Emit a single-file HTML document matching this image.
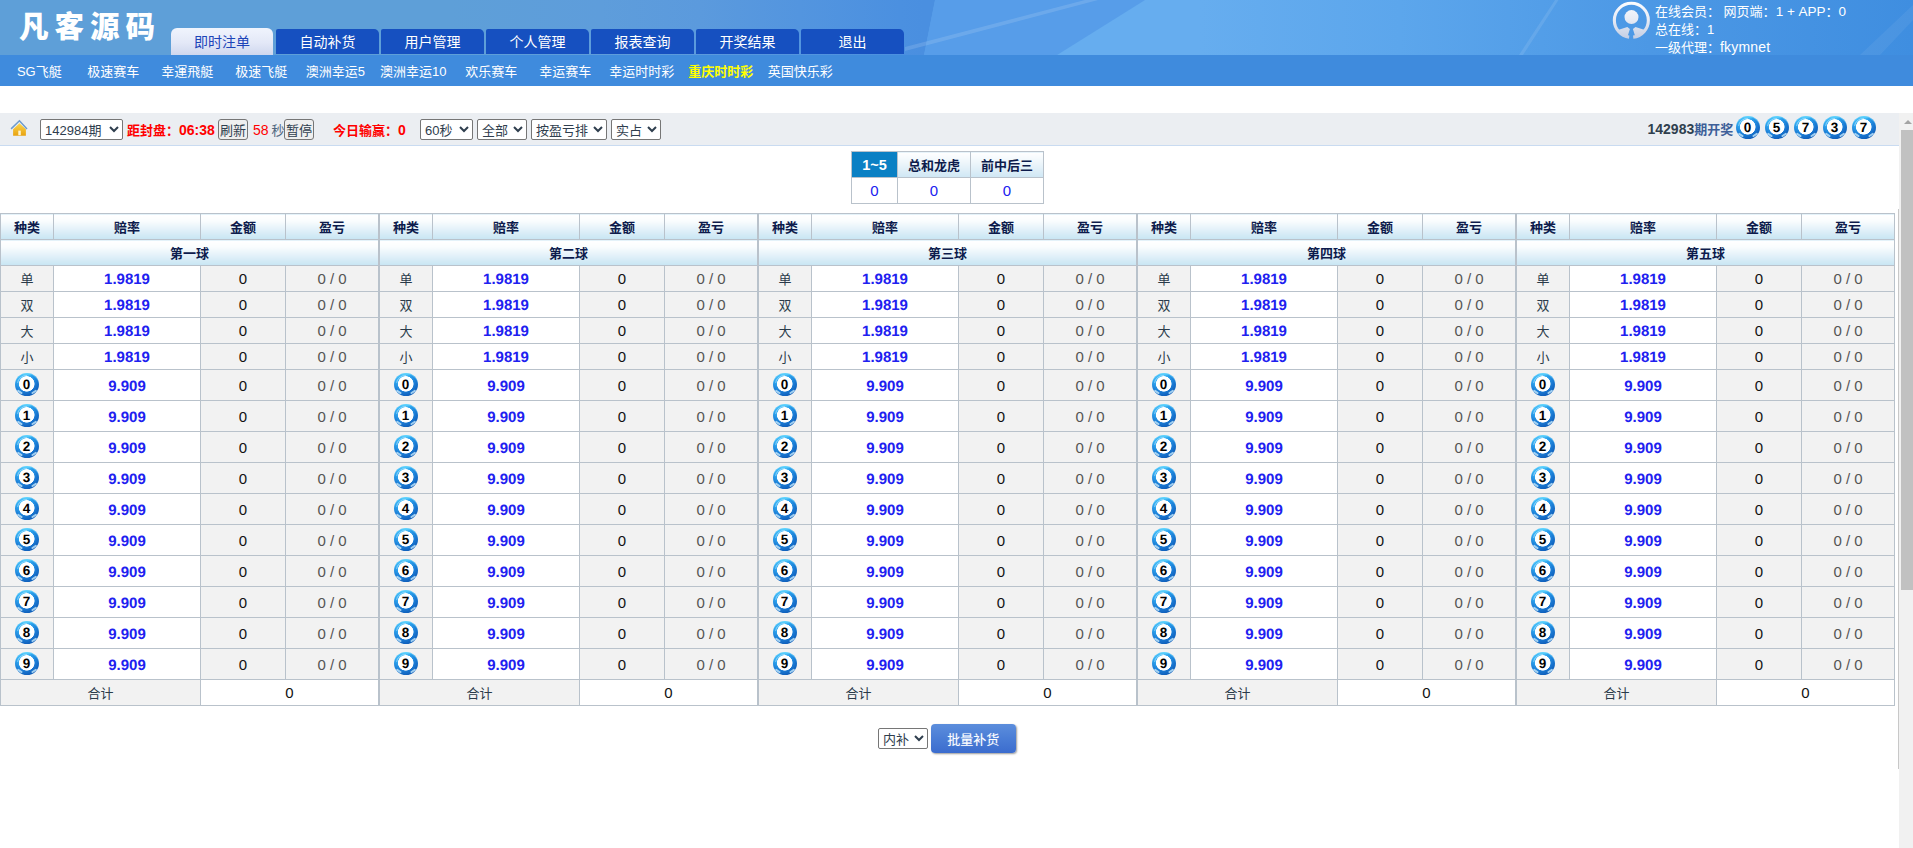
<!DOCTYPE html>
<html lang="zh-CN"><head><meta charset="utf-8"><title>凡客源码</title>
<style>
html,body{margin:0;padding:0}
body{width:1913px;height:848px;overflow:hidden;background:#fff;position:relative;font-family:"Liberation Sans","Noto Sans CJK SC",sans-serif;font-size:13px;color:#222}
a{text-decoration:none;color:inherit}
#hd{position:absolute;left:0;top:0;width:1913px;height:55px;background:linear-gradient(90deg,#5e9fd8 0,#5e9fd8 450px,#5e9ddb 600px,#5b9add 700px,#5395df 800px,#4b90e0 900px,#4a8fe0 924px,#66adef 924px,#66adef 1200px,#5ca6ec 1400px,#4c98e5 1650px,#3f8ee0 1913px);overflow:hidden}
#logo{position:absolute;left:19px;top:1.5px;font-size:29.5px;line-height:44px;font-weight:900;color:#fff;letter-spacing:6px;font-family:"Noto Sans CJK SC","Liberation Sans",sans-serif}
.tab{position:absolute;top:29px;width:103px;height:25px;line-height:26px;text-align:center;color:#fff;font-size:14px;background:#1650c0;border-radius:2px 5px 0 0}
.tab.on{top:28px;height:27px;line-height:29px;width:102px;color:#1c44b8;background:linear-gradient(#f0f4fd,#e3e8f7 55%,#cfd7ee);border-radius:6px 6px 0 0}
#usr{position:absolute;left:1655px;top:3.1px;color:#fff;font-size:13px;line-height:17.75px;white-space:nowrap}
#usr span{line-height:0}
#ava{position:absolute;left:1605px;top:0}
#nav{position:absolute;left:0;top:55px;width:1913px;height:31px;background:#3f8bdd}
#nav a{position:absolute;top:0;height:31px;line-height:33px;text-align:center;color:#fff;font-size:13px;white-space:nowrap}
#nav a.cur{color:#ff0;font-weight:bold}
#bar{position:absolute;left:0;top:113px;width:1899px;height:32px;background:#ebeef2;border-bottom:1px solid #c9dbf1}
#bar .x{position:absolute;white-space:nowrap}
.sel{position:absolute;box-sizing:border-box;height:21px;top:6px;border:1px solid #767676;border-radius:2px;background:#fff;font-size:13px;line-height:20px;padding-left:4px;color:#2f3e4e;white-space:nowrap}
.sel{font-family:inherit;margin:0;padding:0 0 0 0;outline:0}
select.sel{font-size:13px;padding-top:2px}
span.sel:after{content:"";position:absolute;right:6px;top:5px;width:5px;height:5px;border-right:2px solid #2c3a44;border-bottom:2px solid #2c3a44;transform:rotate(45deg) scale(.9)}
.btn{position:absolute;box-sizing:border-box;top:6px;height:21px;border:1px solid #767676;border-radius:3px;background:#efefef;font-size:13px;line-height:21px;text-align:center;color:#2f3e4e}
button.btn{font-family:inherit;margin:0;padding:2px 0 0 0;line-height:17px}
.red{color:#f00}
em{font-style:normal;font-size:14px}
.b{font-weight:bold}
#sub{position:absolute;left:851px;top:151px;border-collapse:collapse;font-size:13px}
#sub td,#sub th{border:1px solid #b9c2cb;height:26px;padding:0;text-align:center;box-sizing:border-box}
#sub th{font-weight:bold;color:#0d1b4c;background:linear-gradient(#fff,#eef6fb 40%,#cfe7f4)}
#sub th.on{background:#0a80c4;color:#fff;font-size:14.5px}
#sub td{color:#2020f0;background:#fff;font-size:15px}
.t{position:absolute;top:213px;width:378px;border-collapse:collapse;table-layout:fixed;font-size:13px}
.t td,.t th{border:1px solid #b9c2cb;padding:0;text-align:center;box-sizing:border-box;height:26px;line-height:20px}
.t th{font-weight:bold;color:#0d1b4c;background:linear-gradient(#fff 0,#fafdfe 25%,#e3f1f9 60%,#c7e5f3 100%)}
.t td.k{background:#f2f2f2;color:#2a3b4a}
.t td.o{background:#fff;color:#2020f0;font-weight:bold;font-size:15px;text-rendering:geometricPrecision}
.t td.m{background:#f2f2f2;color:#111;font-size:15px}
.t td.y{background:#f2f2f2;color:#555;font-size:15px}
.t td.s{background:#fff;color:#111;font-size:15px}
.t tr.r2 td{height:31px}
.t tr.r2 td.k{vertical-align:top;line-height:0}
.t tr.r2 td.k .ball{margin-top:3px}
.t tr.r2 td.o,.t tr.r2 td.m,.t tr.r2 td.y{padding-top:2px}
.t th{padding-top:2px}
.t tr.r1 td.k,.t tr.ft td.k,.t tr.r1 td.o{padding-top:2px}
.t tr.r2 td.o{padding-top:4px}
.t tr.ft td{height:26px}
.ball{display:inline-block;position:relative;width:24px;height:23px;border-radius:50%;vertical-align:middle;background:radial-gradient(8.05px 7.95px at 11.75px 10.9px,#fff 93%,rgba(255,255,255,0) 100%),radial-gradient(8px 2.6px at 12px .6px,rgba(110,225,255,.85) 0,rgba(110,225,255,0) 100%),radial-gradient(19px 19px at 8.5px 5px,#4cc4fb 0,#2fa6ef 38%,#1a7ad4 72%,#0f5db8 100%);box-shadow:inset 0 1.3px .8px -.3px rgba(90,208,255,.9)}
.ball b{position:absolute;left:0;top:0;width:23px;height:23px;text-align:center;font:bold 13.5px/1 "Liberation Sans",sans-serif;color:#000;text-rendering:geometricPrecision;box-sizing:border-box;padding-top:5.1px}
.ball b:before{content:"";position:absolute;left:2.4px;top:1.6px;width:16px;height:16px;border-radius:50%;border:1.3px solid transparent;border-top-color:rgba(255,255,255,.38);transform:rotate(-38deg)}
.ball:before,.ball:after{content:"";position:absolute;height:1.5px;width:5.9px;border-radius:1px;background:rgba(196,232,251,.8)}
.ball:before{left:2.1px;top:17.8px;transform:rotate(32.3deg)}
.ball:after{left:16.2px;top:17.6px;transform:rotate(-32deg)}
#sb{position:absolute;left:1899px;top:113px;width:14px;height:735px;background:#f1f1f1}
#sb .th{position:absolute;left:2px;top:17px;width:12px;height:460px;background:#c1c1c1}
#sb .ar{position:absolute;left:4.5px;top:7px;width:0;height:0;border-left:4px solid transparent;border-right:4px solid transparent;border-bottom:4px solid #a3a3a3}
#vl{position:absolute;left:1898px;top:209px;width:1px;height:560px;background:#c8c8c8}
#bt{position:absolute;left:0;top:724px;width:1899px;height:30px}
#bt .sel{top:4px;left:878px;width:50px}
#go{border:0;margin:0;padding:1px 0 0 0;font-family:inherit;cursor:pointer;position:absolute;left:931px;top:0;width:84.5px;height:29px;line-height:30px;text-align:center;color:#fff;font-size:13px;border-radius:4px;background:linear-gradient(#5c8edc,#4a7dd6 50%,#3b6cce);box-shadow:1px 1px 2px rgba(0,0,0,.4);text-shadow:0 0 1px rgba(255,255,255,.4)}
</style></head><body>
<div id="hd">
<svg style="position:absolute;left:0;top:0" width="1913" height="55" viewBox="0 0 1913 55"><polygon points="924,0 935,0 924,55" fill="#4a8fe0"/><polygon points="924,55 935,0 1145,0 1057,55" fill="#488de3" fill-opacity=".5"/><polygon points="905,47 1085,0 1098,0 905,51" fill="#fff" fill-opacity=".13"/><polygon points="1519,55 1555,0 1558.5,0 1523,55" fill="#fff" fill-opacity=".10"/><polygon points="1860,55 1913,5 1913,20 1880,55" fill="#fff" fill-opacity=".06"/></svg>
<div id="logo">凡客源码</div>
<a class="tab on" style="left:171px">即时注单</a><a class="tab" style="left:276px">自动补货</a><a class="tab" style="left:381px">用户管理</a><a class="tab" style="left:486px">个人管理</a><a class="tab" style="left:591px">报表查询</a><a class="tab" style="left:696px">开奖结果</a><a class="tab" style="left:801px">退出</a>
<svg id="ava" width="60" height="44" viewBox="0 0 60 44"><defs><linearGradient id="ag" gradientUnits="userSpaceOnUse" x1="0" y1="2" x2="0" y2="39"><stop offset="0" stop-color="#fcfcfe"/><stop offset=".5" stop-color="#e6eaf4"/><stop offset="1" stop-color="#c3cde3"/></linearGradient><clipPath id="ac"><circle cx="26.35" cy="20.25" r="16.6"/></clipPath></defs><circle cx="26.35" cy="20.25" r="17" fill="none" stroke="url(#ag)" stroke-width="3.1" stroke-dasharray="24.6 4.2 78"/><circle cx="26.5" cy="17.1" r="7" fill="url(#ag)"/><g clip-path="url(#ac)" fill="url(#ag)"><path d="M8 31.7L22.3 27L24.9 29L22.8 35.8L24.3 38.5L20 42H8Z"/><path d="M44.8 31.7L30.5 27L27.9 29L30 35.8L28.5 38.5L32.8 42H44.8Z"/></g></svg>
<div id="usr">在线会员： 网页端：<span style="font-size:13.5px">1 + APP</span>：<span style="font-size:13.5px">0</span><br>总在线：1<br>一级代理：<span style="font-size:14px;letter-spacing:.2px">fkymnet</span></div>
</div>
<div id="nav"><a style="left:2.3px;width:74px">SG飞艇</a><a style="left:76.3px;width:74px">极速赛车</a><a style="left:150.3px;width:74px">幸運飛艇</a><a style="left:224.3px;width:74px">极速飞艇</a><a style="left:298.3px;width:74px">澳洲幸运5</a><a style="left:372.3px;width:82px">澳洲幸运10</a><a style="left:454.3px;width:74px">欢乐赛车</a><a style="left:528.3px;width:74px">幸运赛车</a><a style="left:602.3px;width:79px">幸运时时彩</a><a class="cur" style="left:681.3px;width:79px">重庆时时彩</a><a style="left:760.3px;width:80px">英国快乐彩</a></div>
<div id="bar">
<svg class="x" style="left:10px;top:6px" width="19" height="19" viewBox="0 0 19 19"><defs><linearGradient id="hg" x1="0" y1="0" x2="0" y2="1"><stop offset="0" stop-color="#fbd64e"/><stop offset="1" stop-color="#e8a210"/></linearGradient></defs><path d="M9.45 4.2L15.9 10.2V16.8H3.1V10.2Z" fill="url(#hg)"/><path d="M1.1 9.9L9.45 1.8L17 9.9" fill="none" stroke="#6d9bcd" stroke-width="1.5" stroke-linejoin="miter"/><rect x="8.3" y="11.6" width="2.5" height="4.6" fill="#fff3cf"/></svg>
<select class="sel" style="left:40px;width:83px"><option>142984期</option></select>
<span class="x red b" style="left:127px;top:8px;line-height:19px">距封盘：<em>06:38</em></span>
<button class="btn" style="left:218px;width:30px">刷新</button>
<span class="x" style="left:253px;top:8px;line-height:19px"><span class="red"><em>58</em></span><span style="color:#4f6780;margin-left:3px">秒</span></span>
<button class="btn" style="left:284px;width:30px">暂停</button>
<span class="x red b" style="left:333px;top:8px;line-height:19px">今日输赢：<em>0</em></span>
<select class="sel" style="left:420px;width:53px"><option>60秒</option><option>30秒</option><option>90秒</option></select>
<select class="sel" style="left:477px;width:50px"><option>全部</option></select>
<select class="sel" style="left:531px;width:76px"><option>按盈亏排</option></select>
<select class="sel" style="left:611px;width:50px"><option>实占</option><option>虚占</option></select>
<span class="x b" style="left:1647.5px;top:7px;line-height:19px;color:#3d5f99"><em style="color:#2f3f4e">142983</em>期开奖</span>
<span class="ball" style="position:absolute;left:1736px;top:3px"><b>0</b></span><span class="ball" style="position:absolute;left:1765px;top:3px"><b>5</b></span><span class="ball" style="position:absolute;left:1794px;top:3px"><b>7</b></span><span class="ball" style="position:absolute;left:1823px;top:3px"><b>3</b></span><span class="ball" style="position:absolute;left:1852px;top:3px"><b>7</b></span>
</div>
<table id="sub"><tr><th class="on" style="width:46px">1~5</th><th style="width:73px">总和龙虎</th><th style="width:73px">前中后三</th></tr><tr><td>0</td><td>0</td><td>0</td></tr></table>
<table class="t" style="left:0px"><colgroup><col style="width:53px"><col style="width:147px"><col style="width:85px"><col style="width:93px"></colgroup>
<tr class="hd"><th>种类</th><th>赔率</th><th>金额</th><th>盈亏</th></tr>
<tr class="hd tt"><th colspan="4">第一球</th></tr>
<tr class="r1"><td class="k">单</td><td class="o">1.9819</td><td class="m">0</td><td class="y">0 / 0</td></tr>
<tr class="r1"><td class="k">双</td><td class="o">1.9819</td><td class="m">0</td><td class="y">0 / 0</td></tr>
<tr class="r1"><td class="k">大</td><td class="o">1.9819</td><td class="m">0</td><td class="y">0 / 0</td></tr>
<tr class="r1"><td class="k">小</td><td class="o">1.9819</td><td class="m">0</td><td class="y">0 / 0</td></tr>
<tr class="r2"><td class="k"><span class="ball"><b>0</b></span></td><td class="o">9.909</td><td class="m">0</td><td class="y">0 / 0</td></tr>
<tr class="r2"><td class="k"><span class="ball"><b>1</b></span></td><td class="o">9.909</td><td class="m">0</td><td class="y">0 / 0</td></tr>
<tr class="r2"><td class="k"><span class="ball"><b>2</b></span></td><td class="o">9.909</td><td class="m">0</td><td class="y">0 / 0</td></tr>
<tr class="r2"><td class="k"><span class="ball"><b>3</b></span></td><td class="o">9.909</td><td class="m">0</td><td class="y">0 / 0</td></tr>
<tr class="r2"><td class="k"><span class="ball"><b>4</b></span></td><td class="o">9.909</td><td class="m">0</td><td class="y">0 / 0</td></tr>
<tr class="r2"><td class="k"><span class="ball"><b>5</b></span></td><td class="o">9.909</td><td class="m">0</td><td class="y">0 / 0</td></tr>
<tr class="r2"><td class="k"><span class="ball"><b>6</b></span></td><td class="o">9.909</td><td class="m">0</td><td class="y">0 / 0</td></tr>
<tr class="r2"><td class="k"><span class="ball"><b>7</b></span></td><td class="o">9.909</td><td class="m">0</td><td class="y">0 / 0</td></tr>
<tr class="r2"><td class="k"><span class="ball"><b>8</b></span></td><td class="o">9.909</td><td class="m">0</td><td class="y">0 / 0</td></tr>
<tr class="r2"><td class="k"><span class="ball"><b>9</b></span></td><td class="o">9.909</td><td class="m">0</td><td class="y">0 / 0</td></tr>
<tr class="ft"><td class="k" colspan="2">合计</td><td class="s" colspan="2">0</td></tr>
</table><table class="t" style="left:379px"><colgroup><col style="width:53px"><col style="width:147px"><col style="width:85px"><col style="width:93px"></colgroup>
<tr class="hd"><th>种类</th><th>赔率</th><th>金额</th><th>盈亏</th></tr>
<tr class="hd tt"><th colspan="4">第二球</th></tr>
<tr class="r1"><td class="k">单</td><td class="o">1.9819</td><td class="m">0</td><td class="y">0 / 0</td></tr>
<tr class="r1"><td class="k">双</td><td class="o">1.9819</td><td class="m">0</td><td class="y">0 / 0</td></tr>
<tr class="r1"><td class="k">大</td><td class="o">1.9819</td><td class="m">0</td><td class="y">0 / 0</td></tr>
<tr class="r1"><td class="k">小</td><td class="o">1.9819</td><td class="m">0</td><td class="y">0 / 0</td></tr>
<tr class="r2"><td class="k"><span class="ball"><b>0</b></span></td><td class="o">9.909</td><td class="m">0</td><td class="y">0 / 0</td></tr>
<tr class="r2"><td class="k"><span class="ball"><b>1</b></span></td><td class="o">9.909</td><td class="m">0</td><td class="y">0 / 0</td></tr>
<tr class="r2"><td class="k"><span class="ball"><b>2</b></span></td><td class="o">9.909</td><td class="m">0</td><td class="y">0 / 0</td></tr>
<tr class="r2"><td class="k"><span class="ball"><b>3</b></span></td><td class="o">9.909</td><td class="m">0</td><td class="y">0 / 0</td></tr>
<tr class="r2"><td class="k"><span class="ball"><b>4</b></span></td><td class="o">9.909</td><td class="m">0</td><td class="y">0 / 0</td></tr>
<tr class="r2"><td class="k"><span class="ball"><b>5</b></span></td><td class="o">9.909</td><td class="m">0</td><td class="y">0 / 0</td></tr>
<tr class="r2"><td class="k"><span class="ball"><b>6</b></span></td><td class="o">9.909</td><td class="m">0</td><td class="y">0 / 0</td></tr>
<tr class="r2"><td class="k"><span class="ball"><b>7</b></span></td><td class="o">9.909</td><td class="m">0</td><td class="y">0 / 0</td></tr>
<tr class="r2"><td class="k"><span class="ball"><b>8</b></span></td><td class="o">9.909</td><td class="m">0</td><td class="y">0 / 0</td></tr>
<tr class="r2"><td class="k"><span class="ball"><b>9</b></span></td><td class="o">9.909</td><td class="m">0</td><td class="y">0 / 0</td></tr>
<tr class="ft"><td class="k" colspan="2">合计</td><td class="s" colspan="2">0</td></tr>
</table><table class="t" style="left:758px"><colgroup><col style="width:53px"><col style="width:147px"><col style="width:85px"><col style="width:93px"></colgroup>
<tr class="hd"><th>种类</th><th>赔率</th><th>金额</th><th>盈亏</th></tr>
<tr class="hd tt"><th colspan="4">第三球</th></tr>
<tr class="r1"><td class="k">单</td><td class="o">1.9819</td><td class="m">0</td><td class="y">0 / 0</td></tr>
<tr class="r1"><td class="k">双</td><td class="o">1.9819</td><td class="m">0</td><td class="y">0 / 0</td></tr>
<tr class="r1"><td class="k">大</td><td class="o">1.9819</td><td class="m">0</td><td class="y">0 / 0</td></tr>
<tr class="r1"><td class="k">小</td><td class="o">1.9819</td><td class="m">0</td><td class="y">0 / 0</td></tr>
<tr class="r2"><td class="k"><span class="ball"><b>0</b></span></td><td class="o">9.909</td><td class="m">0</td><td class="y">0 / 0</td></tr>
<tr class="r2"><td class="k"><span class="ball"><b>1</b></span></td><td class="o">9.909</td><td class="m">0</td><td class="y">0 / 0</td></tr>
<tr class="r2"><td class="k"><span class="ball"><b>2</b></span></td><td class="o">9.909</td><td class="m">0</td><td class="y">0 / 0</td></tr>
<tr class="r2"><td class="k"><span class="ball"><b>3</b></span></td><td class="o">9.909</td><td class="m">0</td><td class="y">0 / 0</td></tr>
<tr class="r2"><td class="k"><span class="ball"><b>4</b></span></td><td class="o">9.909</td><td class="m">0</td><td class="y">0 / 0</td></tr>
<tr class="r2"><td class="k"><span class="ball"><b>5</b></span></td><td class="o">9.909</td><td class="m">0</td><td class="y">0 / 0</td></tr>
<tr class="r2"><td class="k"><span class="ball"><b>6</b></span></td><td class="o">9.909</td><td class="m">0</td><td class="y">0 / 0</td></tr>
<tr class="r2"><td class="k"><span class="ball"><b>7</b></span></td><td class="o">9.909</td><td class="m">0</td><td class="y">0 / 0</td></tr>
<tr class="r2"><td class="k"><span class="ball"><b>8</b></span></td><td class="o">9.909</td><td class="m">0</td><td class="y">0 / 0</td></tr>
<tr class="r2"><td class="k"><span class="ball"><b>9</b></span></td><td class="o">9.909</td><td class="m">0</td><td class="y">0 / 0</td></tr>
<tr class="ft"><td class="k" colspan="2">合计</td><td class="s" colspan="2">0</td></tr>
</table><table class="t" style="left:1137px"><colgroup><col style="width:53px"><col style="width:147px"><col style="width:85px"><col style="width:93px"></colgroup>
<tr class="hd"><th>种类</th><th>赔率</th><th>金额</th><th>盈亏</th></tr>
<tr class="hd tt"><th colspan="4">第四球</th></tr>
<tr class="r1"><td class="k">单</td><td class="o">1.9819</td><td class="m">0</td><td class="y">0 / 0</td></tr>
<tr class="r1"><td class="k">双</td><td class="o">1.9819</td><td class="m">0</td><td class="y">0 / 0</td></tr>
<tr class="r1"><td class="k">大</td><td class="o">1.9819</td><td class="m">0</td><td class="y">0 / 0</td></tr>
<tr class="r1"><td class="k">小</td><td class="o">1.9819</td><td class="m">0</td><td class="y">0 / 0</td></tr>
<tr class="r2"><td class="k"><span class="ball"><b>0</b></span></td><td class="o">9.909</td><td class="m">0</td><td class="y">0 / 0</td></tr>
<tr class="r2"><td class="k"><span class="ball"><b>1</b></span></td><td class="o">9.909</td><td class="m">0</td><td class="y">0 / 0</td></tr>
<tr class="r2"><td class="k"><span class="ball"><b>2</b></span></td><td class="o">9.909</td><td class="m">0</td><td class="y">0 / 0</td></tr>
<tr class="r2"><td class="k"><span class="ball"><b>3</b></span></td><td class="o">9.909</td><td class="m">0</td><td class="y">0 / 0</td></tr>
<tr class="r2"><td class="k"><span class="ball"><b>4</b></span></td><td class="o">9.909</td><td class="m">0</td><td class="y">0 / 0</td></tr>
<tr class="r2"><td class="k"><span class="ball"><b>5</b></span></td><td class="o">9.909</td><td class="m">0</td><td class="y">0 / 0</td></tr>
<tr class="r2"><td class="k"><span class="ball"><b>6</b></span></td><td class="o">9.909</td><td class="m">0</td><td class="y">0 / 0</td></tr>
<tr class="r2"><td class="k"><span class="ball"><b>7</b></span></td><td class="o">9.909</td><td class="m">0</td><td class="y">0 / 0</td></tr>
<tr class="r2"><td class="k"><span class="ball"><b>8</b></span></td><td class="o">9.909</td><td class="m">0</td><td class="y">0 / 0</td></tr>
<tr class="r2"><td class="k"><span class="ball"><b>9</b></span></td><td class="o">9.909</td><td class="m">0</td><td class="y">0 / 0</td></tr>
<tr class="ft"><td class="k" colspan="2">合计</td><td class="s" colspan="2">0</td></tr>
</table><table class="t" style="left:1516px"><colgroup><col style="width:53px"><col style="width:147px"><col style="width:85px"><col style="width:93px"></colgroup>
<tr class="hd"><th>种类</th><th>赔率</th><th>金额</th><th>盈亏</th></tr>
<tr class="hd tt"><th colspan="4">第五球</th></tr>
<tr class="r1"><td class="k">单</td><td class="o">1.9819</td><td class="m">0</td><td class="y">0 / 0</td></tr>
<tr class="r1"><td class="k">双</td><td class="o">1.9819</td><td class="m">0</td><td class="y">0 / 0</td></tr>
<tr class="r1"><td class="k">大</td><td class="o">1.9819</td><td class="m">0</td><td class="y">0 / 0</td></tr>
<tr class="r1"><td class="k">小</td><td class="o">1.9819</td><td class="m">0</td><td class="y">0 / 0</td></tr>
<tr class="r2"><td class="k"><span class="ball"><b>0</b></span></td><td class="o">9.909</td><td class="m">0</td><td class="y">0 / 0</td></tr>
<tr class="r2"><td class="k"><span class="ball"><b>1</b></span></td><td class="o">9.909</td><td class="m">0</td><td class="y">0 / 0</td></tr>
<tr class="r2"><td class="k"><span class="ball"><b>2</b></span></td><td class="o">9.909</td><td class="m">0</td><td class="y">0 / 0</td></tr>
<tr class="r2"><td class="k"><span class="ball"><b>3</b></span></td><td class="o">9.909</td><td class="m">0</td><td class="y">0 / 0</td></tr>
<tr class="r2"><td class="k"><span class="ball"><b>4</b></span></td><td class="o">9.909</td><td class="m">0</td><td class="y">0 / 0</td></tr>
<tr class="r2"><td class="k"><span class="ball"><b>5</b></span></td><td class="o">9.909</td><td class="m">0</td><td class="y">0 / 0</td></tr>
<tr class="r2"><td class="k"><span class="ball"><b>6</b></span></td><td class="o">9.909</td><td class="m">0</td><td class="y">0 / 0</td></tr>
<tr class="r2"><td class="k"><span class="ball"><b>7</b></span></td><td class="o">9.909</td><td class="m">0</td><td class="y">0 / 0</td></tr>
<tr class="r2"><td class="k"><span class="ball"><b>8</b></span></td><td class="o">9.909</td><td class="m">0</td><td class="y">0 / 0</td></tr>
<tr class="r2"><td class="k"><span class="ball"><b>9</b></span></td><td class="o">9.909</td><td class="m">0</td><td class="y">0 / 0</td></tr>
<tr class="ft"><td class="k" colspan="2">合计</td><td class="s" colspan="2">0</td></tr>
</table>
<div id="bt"><select class="sel"><option>内补</option><option>外补</option></select><button id="go">批量补货</button></div>
<div id="vl"></div>
<div id="sb"><div class="ar"></div><div class="th"></div></div>
</body></html>
